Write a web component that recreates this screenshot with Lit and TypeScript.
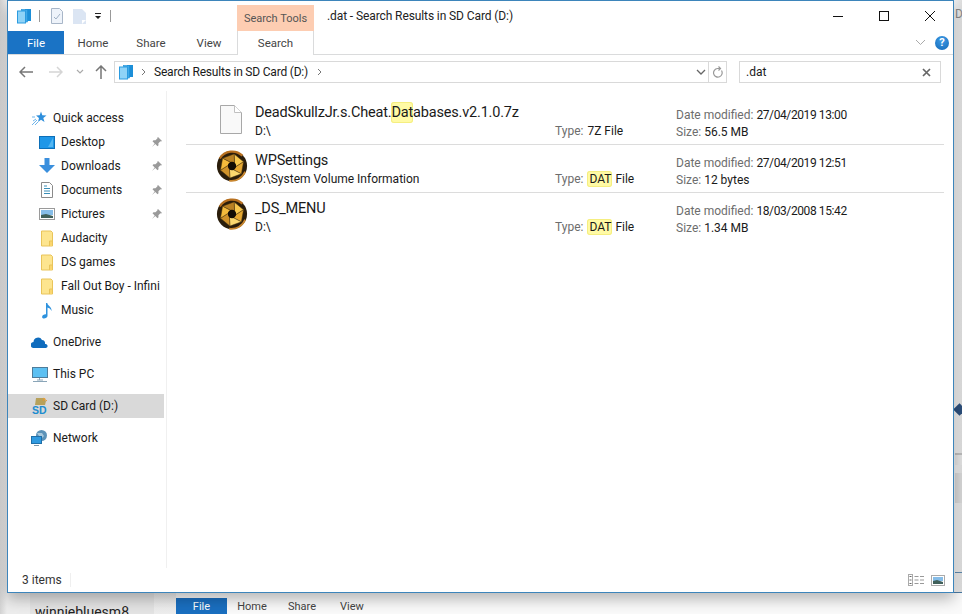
import { LitElement, html, css, svg } from 'lit'
import { customElement } from 'lit/decorators.js'

const stack = svg`<svg width="16" height="16" viewBox="0 0 16 16"><rect x="9" y="1" width="6" height="12" fill="#1c8fd8"/><rect x="5.500" y="1.500" width="6" height="12.500" fill="#3fa9e8" stroke="#1c8fd8" stroke-width=".6"/><rect x="1.500" y="3" width="8" height="12" fill="#8fd3f7" stroke="#2b9be0"/></svg>`

const folder = svg`<svg width="14" height="17" viewBox="0 0 14 17"><path d="M1.500 1h9.500l1.500 1.500v13.500h-11z" fill="#fde58f" stroke="#e9c45a"/><path d="M9.500 16v-5h3v5" fill="#fbd66e" stroke="#e9c45a"/></svg>`

const pin = svg`<svg width="12" height="12" viewBox="0 0 12 12"><path d="M7 1l4 4-1 .6-.6-.3-2 2 .1 2-1 1-2.200-2.200L1 11l2.700-3.600L1.500 5.200l1-1 2 .1 2-2-.2-.6z" fill="#9a9a9a"/></svg>`

const polar = (r: number, deg: number) => {
  const a = (deg * Math.PI) / 180
  return `${(17 + r * Math.cos(a)).toFixed(2)} ${(17 + r * Math.sin(a)).toFixed(2)}`
}

const bladeColors = ['#f8c84e', '#e6a832', '#fbd86f', '#d0922a', '#f5bb3c', '#b98124']

const aperture = svg`<svg width="32" height="32" viewBox="0 0 34 34">
  <circle cx="17" cy="17" r="16" fill="#2a1d0b"/>
  <path d="M4 9A15.500 15.500 0 0 1 28 6" fill="none" stroke="#b8701f" stroke-width="2.400"/>
  <path d="M31 23A15.500 15.500 0 0 1 14 32.500" fill="none" stroke="#c8862e" stroke-width="1.800"/>
  ${bladeColors.map((c, i) => {
    const t = i * 60 - 80
    return svg`<path d="M${polar(13, t)}L${polar(13, t + 60)}L${polar(4.2, t + 90)}L${polar(4.2, t + 30)}z" fill="${c}" stroke="#4a3610" stroke-width=".5"/>`
  })}
  <circle cx="17" cy="17" r="4.400" fill="#120c05"/>
</svg>`

const filePage = svg`<svg width="22" height="29" viewBox="0 0 22 29"><path d="M.5.500h14l7 7v21H.5z" fill="#f9f9f9" stroke="#a8a8a8"/><path d="M14.500.500v7h7" fill="#fff" stroke="#c0c0c0"/></svg>`

const sideIcons: Record<string, unknown> = {
  star: svg`<svg width="16" height="16" viewBox="0 0 16 16"><path d="M9 1.500l1.300 3.700 4.200.2-3.200 2.600 1.200 4-3.500-2.300L6 12l1-4-3-2.500 3.700-.2z" fill="#2e8fdc"/><path d="M0 15l5-5M1 11l3-2M3 15l3-3M0 7h3" stroke="#6fb5ea"/></svg>`,
  desktop: svg`<svg width="16" height="13" viewBox="0 0 16 13"><rect x=".5" y=".5" width="15" height="12" fill="#1f97e8" stroke="#0d6fb8"/><path d="M9 11l5-9v9z" fill="#55b7f2"/></svg>`,
  downloads: svg`<svg width="16" height="16" viewBox="0 0 16 16"><path d="M5.500 0h5v7H16l-8 8-8-8h5.500z" fill="#3a8fdd"/></svg>`,
  documents: svg`<svg width="12" height="16" viewBox="0 0 12 16"><path d="M.5.500h8l3 3v12H.5z" fill="#fff" stroke="#8a8a8a"/><path d="M3 4h3M3 6.500h6M3 9h6M3 11.500h6" stroke="#3a8fb8"/></svg>`,
  pictures: svg`<svg width="16" height="12" viewBox="0 0 16 12"><rect x=".5" y=".5" width="15" height="11" fill="#fff" stroke="#9a9a9a"/><rect x="2" y="2" width="12" height="5" fill="#86bde8"/><path d="M2 7l5-1 7 2v2H2z" fill="#40605a"/></svg>`,
  music: svg`<svg width="12" height="17" viewBox="0 0 12 17"><path d="M5 1h1.300c.3 2.800 4.700 3.500 4.200 8-.6-2-2.700-3.200-4-3.500V14c0 2-4.500 3.500-5.300 1.500C.6 13.500 3 12 5 12.200z" fill="#2e92de"/></svg>`,
  cloud: svg`<svg width="17" height="11" viewBox="0 0 17 11"><path d="M3 11a3 3 0 0 1-.5-6A4.500 4.500 0 0 1 11 3a3.500 3.500 0 0 1 3 4 2 2 0 0 1 1 4z" fill="#0f6cbd"/></svg>`,
  pc: svg`<svg width="16" height="15" viewBox="0 0 16 15"><rect x=".5" y=".5" width="15" height="10" fill="#5cc0f2" stroke="#4e7c9a"/><path d="M5 13h6M7.500 11v2M1 14.500h14" stroke="#8aa5b8"/></svg>`,
  sd: svg`<svg width="16" height="18" viewBox="0 0 16 18"><path d="M4 1h7l3 3-1 4H3z" fill="#b7a15a"/><path d="M11 1l4 3M13 1l-2 3" stroke="#e39a32"/><text x="0" y="17" font-family="Liberation Sans" font-size="10.500" font-weight="700" fill="#1c8ccf">SD</text></svg>`,
  network: svg`<svg width="17" height="16" viewBox="0 0 17 16"><circle cx="10.500" cy="5.500" r="5.500" fill="#5d93b8"/><path d="M6 3h5l2 3-3 3z" fill="#a9c9dd"/><rect x=".5" y="6.500" width="10" height="7" fill="#2f9ae0" stroke="#1f6fa8"/><path d="M3 15.500h5" stroke="#7d98aa"/></svg>`,
}

const files = [
  { kind: 'page', name: ['DeadSkullzJr.s.Cheat.', 'Dat', 'abases.v2.1.0.7z'], path: 'D:\\', type: ['', '7Z File'], date: '27/04/2019 13:00', size: '56.5 MB' },
  { kind: 'dat', name: ['WPSettings', '', ''], path: 'D:\\System Volume Information', type: ['DAT', ' File'], date: '27/04/2019 12:51', size: '12 bytes' },
  { kind: 'dat', name: ['_DS_MENU', '', ''], path: 'D:\\', type: ['DAT', ' File'], date: '18/03/2008 15:42', size: '1.34 MB' },
]

@customElement('app-root')
export class AppRoot extends LitElement {
  static styles = css`
:host {
  display: block;
  position: relative;
  width: 962px;
  height: 614px;
  overflow: hidden;
  font-family: Roboto, "Liberation Sans", sans-serif;
  font-size: 12px;
  color: #1a1a1a;
  background: #e9e9e9;
}

.backdrop {
  position: absolute;
  inset: 0;
  background: linear-gradient(90deg, #d2d2d2 0, #ededed 7px, #f0f0f0 955px, #dedede 962px);
}

.strip {
  position: absolute;
  left: 955px;
  top: 0;
  width: 7px;
  height: 590px;
  color: #888;
  overflow: hidden;
}

.strip .letter { position: absolute; left: 0; top: 7px; }
.strip .band { position: absolute; left: 0; width: 7px; }
.strip .b1 { top: 453px; height: 2px; background: #bdbdbd; }
.strip .b2 { top: 455px; height: 10px; background: #e4e4e4; }
.strip .b3 { top: 473px; height: 30px; background: #d8d8d8; }
.strip .b4 { top: 572px; height: 1px; background: #5e89ad; }

.under-left {
  position: absolute;
  left: 30px;
  top: 590px;
  width: 124px;
  height: 24px;
  background: #e4e4e4;
  overflow: hidden;
}

.under-left span {
  position: absolute;
  left: 5px;
  top: 12px;
  font-size: 14px;
  line-height: 20px;
  color: #222;
}

.under-right {
  position: absolute;
  left: 176px;
  top: 592px;
  right: 0;
  bottom: 0;
  background: #fafafa;
  border-top: 1px solid #4a7ba5;
  display: flex;
  align-items: flex-end;
  font-size: 11px;
  color: #444;
}

.under-right div {
  height: 16px;
  line-height: 18px;
  text-align: center;
}

.under-right .file { width: 51px; background: #1a6fc0; color: #fff; }
.under-right .tab { width: 50px; }

.diamond {
  position: absolute;
  left: 955px;
  top: 405px;
  width: 9px;
  height: 9px;
  background: #2c4f7c;
  transform: rotate(45deg);
}

.window {
  position: absolute;
  left: 7px;
  top: 0;
  width: 947px;
  height: 593px;
  box-sizing: border-box;
  background: #fff;
  border: 1px solid #3d85bb;
  box-shadow: 0 6px 14px rgba(0, 0, 0, .28);
  display: flex;
  flex-direction: column;
}

.titlebar {
  height: 30px;
  display: flex;
  align-items: center;
  position: relative;
  flex: none;
}

.qat {
  width: 229px;
  display: flex;
  align-items: center;
  padding-left: 8px;
  box-sizing: border-box;
  height: 100%;
  flex: none;
}

.qat svg { display: block; }
.qat .sep { width: 1px; height: 12px; background: #999; }
.qat .sep1 { margin: 0 11px 0 7px; }
.qat .sep2 { margin-left: 7px; }
.qat .doc2 { margin-left: 10px; }
.qat .more { margin-left: 8px; }

.context {
  width: 77px;
  height: 26px;
  margin-top: 4px;
  background: #fdcdb2;
  color: #555;
  font-size: 11px;
  text-align: center;
  line-height: 28px;
  flex: none;
}

.title {
  margin-left: 13px;
  flex: 1;
  color: #222;
  letter-spacing: -.1px;
}

.controls {
  display: flex;
  align-items: center;
}

.controls button {
  width: 46px;
  height: 30px;
  border: 0;
  background: none;
  padding: 0;
  display: flex;
  align-items: center;
  justify-content: center;
}

.tabs {
  height: 24px;
  display: flex;
  flex: none;
  border-bottom: 1px solid #dadbdc;
  align-items: stretch;
  color: #444;
  font-size: 11.500px;
  box-sizing: border-box;
}

.tabs div { line-height: 25px; text-align: center; }
.tabs .file { width: 56px; background: #1a73c5; color: #fff; }
.tabs .home { width: 58px; }
.tabs .share { width: 58px; }
.tabs .view { width: 58px; }
.tabs .search {
  width: 77px;
  box-sizing: border-box;
  margin-left: -1px;
  border-left: 1px solid #dadbdc;
  border-right: 1px solid #dadbdc;
  background: #fff;
  height: 24px;
}

.tabs .right {
  margin-left: auto;
  display: flex;
  align-items: center;
  gap: 9px;
  padding: 0 4px 0 0;
}

.help {
  width: 14px;
  height: 14px;
  border-radius: 50%;
  background: radial-gradient(circle at 50% 30%, #3f9be6, #1269b8);
  color: #fff;
  font-size: 11px;
  font-weight: 700;
  line-height: 14px;
  text-align: center;
}

.nav {
  height: 36px;
  flex: none;
  display: flex;
  align-items: center;
  box-sizing: border-box;
  padding: 0 12px 2px 0;
}

.nav-buttons {
  width: 106px;
  height: 22px;
  flex: none;
  display: flex;
  align-items: center;
  padding-left: 11px;
  box-sizing: border-box;
}

.nav-buttons .fwd { margin-left: 16px; }
.nav-buttons .down { margin-left: 13px; }
.nav-buttons .up { margin-left: 11px; }

.address, .searchbox {
  height: 22px;
  box-sizing: border-box;
  border: 1px solid #d9d9d9;
  display: flex;
  align-items: center;
}

.address { width: 613px; padding-left: 3px; flex: none; }
.address .crumb1 { margin: 0 8px 0 7px; }
.address .path { margin-right: 6px; letter-spacing: -.2px; }
.address .crumb2 { margin-left: 3px; }
.address .gap { flex: 1; }
.address .drop { margin-right: 2px; }
.address .refresh {
  width: 17px;
  height: 20px;
  border-left: 1px solid #d9d9d9;
  display: flex;
  align-items: center;
  justify-content: center;
}

.searchbox {
  width: 202px;
  margin-left: 12px;
  padding: 0 9px 0 6px;
  justify-content: space-between;
  flex: none;
}

.main {
  flex: 1;
  display: flex;
  min-height: 0;
}

.side {
  width: 159px;
  flex: none;
  border-right: 1px solid #f0f0f0;
  padding-top: 15px;
  box-sizing: border-box;
}

.item {
  width: 156px;
  height: 24px;
  display: flex;
  align-items: center;
  overflow: hidden;
  white-space: nowrap;
  position: relative;
}

.item .ico {
  width: 24px;
  display: flex;
  justify-content: center;
  flex: none;
}

.item.top { padding-left: 23px; box-sizing: border-box; }
.item.top .ico { width: 17px; margin-right: 5px; }
.item.sub { padding-left: 30px; box-sizing: border-box; }
.item.sub .ico { width: 18px; margin-right: 5px; }
.item .pin { position: absolute; left: 143px; top: 6px; display: flex; }
.item.sel { background: #d9d9d9; }
.group { margin-top: 8px; }

.results {
  flex: 1;
  padding: 6px 9px 0 19px;
  min-width: 0;
}

.row {
  display: grid;
  grid-template-columns: 69px 300px 121px 1fr;
  height: 48px;
  box-sizing: border-box;
  border-bottom: 1px solid #dcdcdc;
}

.row:last-child { border-bottom: 0; }

.thumb {
  display: flex;
  align-items: flex-start;
  justify-content: flex-end;
  padding: 5px 7px 0 0;
}

.thumb.page { padding: 8px 13px 0 0; }

.name {
  font-size: 14.500px;
  letter-spacing: -.18px;
  line-height: 22px;
  margin-top: 5px;
  white-space: nowrap;
}

.name mark { padding: 2px 0; }

.sub-line { line-height: 16px; margin-top: -1px; }

.type { padding-top: 26px; line-height: 16px; white-space: nowrap; }
.type .label { margin-right: 1px; }
.type mark { padding: 1px 1px 1px 2px; }
.meta { padding-top: 10px; line-height: 17px; white-space: nowrap; }
.meta .value { letter-spacing: -.4px; }
.label { color: #6d6d6d; }

mark {
  background: #fffaa5;
  box-shadow: inset 0 0 0 1px #f5ee80;
  border-radius: 3px;
  color: inherit;
}

.status {
  height: 24px;
  flex: none;
  display: flex;
  align-items: center;
  padding: 0 8px 0 14px;
  color: #333;
}

.status .count { width: 48px; border-right: 1px solid #efefef; }
.views { margin-left: auto; display: flex; gap: 7px; align-items: center; }
.views svg { display: block; }
`

  sideItem (cls: string, icon: string | null, label: string, pinned = false) {
    return html`
      <div class="item ${cls}">
        <span class="ico">${icon ? sideIcons[icon] : folder}</span>${label}
        ${pinned ? html`<span class="pin">${pin}</span>` : ''}
      </div>`
  }

  renderRow (f: typeof files[number]) {
    return html`
      <div class="row">
        <div class="thumb ${f.kind}">${f.kind === 'page' ? filePage : aperture}</div>
        <div>
          <div class="name">${f.name[0]}${f.name[1] ? html`<mark>${f.name[1]}</mark>` : ''}${f.name[2]}</div>
          <div class="sub-line">${f.path}</div>
        </div>
        <div class="type"><span class="label">Type:</span> ${f.type[0] ? html`<mark>${f.type[0]}</mark>` : ''}${f.type[1]}</div>
        <div class="meta">
          <div><span class="label">Date modified:</span> <span class="value">${f.date}</span></div>
          <div><span class="label">Size:</span> ${f.size}</div>
        </div>
      </div>`
  }

  render () {
    return html`
      <div class="backdrop"></div>
      <div class="strip">
        <span class="letter">D</span>
        <div class="band b1"></div>
        <div class="band b2"></div>
        <div class="band b3"></div>
        <div class="band b4"></div>
      </div>
      <div class="under-left"><span>winniebluesm8</span></div>
      <div class="under-right">
        <div class="file">File</div>
        <div class="tab">Home</div>
        <div class="tab">Share</div>
        <div class="tab">View</div>
      </div>
      <div class="diamond"></div>

      <div class="window">
        <div class="titlebar">
          <div class="qat">
            ${stack}
            <span class="sep sep1"></span>
            <svg width="12" height="16" viewBox="0 0 12 16"><path d="M.5.500h8l3 3v12H.5z" fill="#eef3fa" stroke="#a8b6c8"/><path d="M3 9l2 2 4-5" fill="none" stroke="#9fb0c4"/></svg>
            <svg class="doc2" width="13" height="15" viewBox="0 0 13 15"><path d="M0 0h9l4 4v11H0z" fill="#dbe5f3"/><path d="M9 15v-4h4" fill="#fff"/></svg>
            <svg class="more" width="9" height="8" viewBox="0 0 9 8"><path d="M1 1h6v1H1zM1 4h6L4 7z" fill="#222"/></svg>
            <span class="sep sep2"></span>
          </div>
          <div class="context">Search Tools</div>
          <div class="title">.dat - Search Results in SD Card (D:)</div>
          <div class="controls">
            <button><svg width="12" height="12" viewBox="0 0 12 12"><path d="M1 6.500h10" stroke="#111"/></svg></button>
            <button><svg width="12" height="12" viewBox="0 0 12 12"><rect x="1.500" y="1.500" width="9" height="9" fill="none" stroke="#111"/></svg></button>
            <button><svg width="12" height="12" viewBox="0 0 12 12"><path d="M1 1l10 10M11 1L1 11" stroke="#111"/></svg></button>
          </div>
        </div>

        <div class="tabs">
          <div class="file">File</div>
          <div class="home">Home</div>
          <div class="share">Share</div>
          <div class="view">View</div>
          <div class="search">Search</div>
          <div class="right">
            <svg width="11" height="7" viewBox="0 0 11 7"><path d="M1 1l4.500 4.500L10 1" fill="none" stroke="#aaa"/></svg>
            <span class="help">?</span>
          </div>
        </div>

        <div class="nav">
          <div class="nav-buttons">
            <svg width="14" height="12" viewBox="0 0 14 12"><path d="M1 6h13M6 1L1 6l5 5" fill="none" stroke="#777" stroke-width="1.500"/></svg>
            <svg class="fwd" width="14" height="12" viewBox="0 0 14 12"><path d="M0 6h13M8 1l5 5-5 5" fill="none" stroke="#d5d5d5" stroke-width="1.500"/></svg>
            <svg class="down" width="8" height="6" viewBox="0 0 8 6"><path d="M1 1l3 3 3-3" fill="none" stroke="#aaa" stroke-width="1.200"/></svg>
            <svg class="up" width="12" height="14" viewBox="0 0 12 14"><path d="M6 14V1M1 6l5-5 5 5" fill="none" stroke="#777" stroke-width="1.500"/></svg>
          </div>
          <div class="address">
            ${stack}
            <svg class="crumb1" width="5" height="8" viewBox="0 0 5 8"><path d="M1 1l3 3-3 3" fill="none" stroke="#777"/></svg>
            <span class="path">Search Results in SD Card (D:)</span>
            <svg class="crumb2" width="5" height="8" viewBox="0 0 5 8"><path d="M1 1l3 3-3 3" fill="none" stroke="#777"/></svg>
            <span class="gap"></span>
            <svg class="drop" width="10" height="6" viewBox="0 0 10 6"><path d="M1 1l4 4 4-4" fill="none" stroke="#666" stroke-width="1.300"/></svg>
            <span class="refresh"><svg width="11" height="12" viewBox="0 0 11 12"><path d="M9.500 4.500A4.300 4.300 0 1 1 5.500 2.500H8M6.500.500L8.500 2.500 6.500 4.500" fill="none" stroke="#999" stroke-width="1.200"/></svg></span>
          </div>
          <div class="searchbox">
            <span>.dat</span>
            <svg width="9" height="9" viewBox="0 0 9 9"><path d="M1 1l7 7M8 1L1 8" stroke="#666" stroke-width="1.700"/></svg>
          </div>
        </div>

        <div class="main">
          <div class="side">
            ${this.sideItem('top', 'star', 'Quick access')}
            ${this.sideItem('sub', 'desktop', 'Desktop', true)}
            ${this.sideItem('sub', 'downloads', 'Downloads', true)}
            ${this.sideItem('sub', 'documents', 'Documents', true)}
            ${this.sideItem('sub', 'pictures', 'Pictures', true)}
            ${this.sideItem('sub', null, 'Audacity')}
            ${this.sideItem('sub', null, 'DS games')}
            ${this.sideItem('sub', null, 'Fall Out Boy - Infini')}
            ${this.sideItem('sub', 'music', 'Music')}
            <div class="group">${this.sideItem('top', 'cloud', 'OneDrive')}</div>
            <div class="group">${this.sideItem('top', 'pc', 'This PC')}</div>
            <div class="group">${this.sideItem('top sel', 'sd', 'SD Card (D:)')}</div>
            <div class="group">${this.sideItem('top', 'network', 'Network')}</div>
          </div>
          <div class="results">
            ${files.map(f => this.renderRow(f))}
          </div>
        </div>

        <div class="status">
          <span class="count">3 items</span>
          <div class="views">
            <svg width="16" height="12" viewBox="0 0 16 12"><rect x=".5" y=".5" width="4" height="11" fill="none" stroke="#aaa"/><path d="M1.500 2.500h2M1.500 6h2M1.500 9.500h2" stroke="#666"/><path d="M6.500 2.500h4M12 2.500h4M6.500 6h4M12 6h4M6.500 9.500h4M12 9.500h4" stroke="#999"/></svg>
            <svg width="14" height="11" viewBox="0 0 14 11"><rect x=".5" y=".5" width="13" height="10" fill="#fff" stroke="#aaa"/><rect x="2" y="2" width="10" height="4" fill="#86bde8"/><path d="M2 6l4-1 6 2v2H2z" fill="#40605a"/></svg>
          </div>
        </div>
      </div>
    `
  }
}
